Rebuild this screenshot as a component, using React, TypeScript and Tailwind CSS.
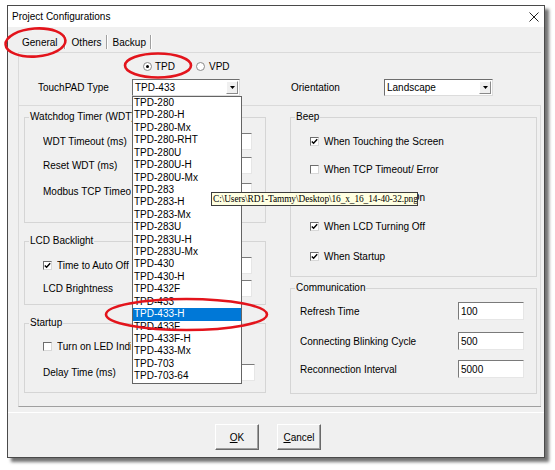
import React from 'react'

const models = [
  'TPD-280', 'TPD-280-H', 'TPD-280-Mx', 'TPD-280-RHT', 'TPD-280U', 'TPD-280U-H', 'TPD-280U-Mx',
  'TPD-283', 'TPD-283-H', 'TPD-283-Mx', 'TPD-283U', 'TPD-283U-H', 'TPD-283U-Mx',
  'TPD-430', 'TPD-430-H', 'TPD-432F', 'TPD-433', 'TPD-433-H', 'TPD-433F', 'TPD-433F-H',
  'TPD-433-Mx', 'TPD-703', 'TPD-703-64',
]

function Field({ value, className = '' }: { value?: string; className?: string }) {
  return (
    <div className={`h-[17px] bg-white border border-t-[#7a7a7a] border-l-[#7a7a7a] border-r-[#e6e6e6] border-b-[#e6e6e6] flex items-center pl-[2px] ${className}`}>
      {value}
    </div>
  )
}

function Check({ on }: { on?: boolean }) {
  return (
    <div className="w-[9px] h-[9px] shrink-0 bg-white border border-t-[#6d6d6d] border-l-[#6d6d6d] border-r-[#d8d8d8] border-b-[#d8d8d8] flex items-center justify-center">
      {on && (
        <svg width="7" height="7" viewBox="0 0 7 7">
          <path d="M0.8 3.4 L2.6 5.3 L6.2 1.2" stroke="#000" strokeWidth="1.4" fill="none" />
        </svg>
      )}
    </div>
  )
}

function Radio({ on }: { on?: boolean }) {
  return (
    <div className="w-[9px] h-[9px] rounded-full bg-white border border-[#8a8a8a] flex items-center justify-center">
      {on && <div className="w-[3px] h-[3px] rounded-full bg-black" />}
    </div>
  )
}

function Combo({ value, className = '', children }: { value: string; className?: string; children?: React.ReactNode }) {
  return (
    <div className={`relative h-[17px] ${className}`}>
      <div className="h-full bg-white border border-t-[#6d6d6d] border-l-[#6d6d6d] border-r-[#dcdcdc] border-b-[#dcdcdc] flex items-center pl-[2px]">
        <span className="flex-1">{value}</span>
        <div className="w-[12px] h-[13px] mr-[1px] bg-[#f0f0f0] border border-t-white border-l-white border-r-[#8a8a8a] border-b-[#8a8a8a] flex items-center justify-center">
          <svg width="5" height="3" viewBox="0 0 5 3">
            <polygon points="0,0 5,0 2.5,3" fill="#000" />
          </svg>
        </div>
      </div>
      {children}
    </div>
  )
}

function Group({ title, className = '', children }: { title: string; className?: string; children: React.ReactNode }) {
  return (
    <fieldset className={`border border-[#d5d5d5] ${className}`}>
      <legend className="ml-[4px] px-[1px] leading-[12px]">{title}</legend>
      {children}
    </fieldset>
  )
}

// left-column labels are cut off where the open list covers them
function Clip({ children }: { children: React.ReactNode }) {
  return <span className="w-[88px] overflow-hidden whitespace-nowrap">{children}</span>
}

function Button({ children }: { children: React.ReactNode }) {
  return (
    <div className="w-[44px] h-[26px] bg-[#f0f0f0] border border-t-white border-l-white border-r-[#696969] border-b-[#696969] shadow-[inset_-1px_-1px_0_#a0a0a0] flex items-center justify-center">
      {children}
    </div>
  )
}

export default function App() {
  return (
    <div className="relative w-[555px] h-[470px] bg-white overflow-hidden pt-[5px] pl-[7px] font-['Liberation_Sans',Arial,sans-serif] text-[10px] text-black">
      <div className="w-[538px] h-[453px] bg-[#f0f0f0] border border-[#4a4a4a] shadow-[4px_4px_3px_rgba(0,0,0,0.55)] flex flex-col">
        {/* title bar */}
        <div className="h-[21px] bg-white flex items-center justify-between pl-[4px] pr-[5px]">
          <span>Project Configurations</span>
          <svg width="10" height="10" viewBox="0 0 10 10">
            <path d="M0.5 0.5 L9.5 9.5 M9.5 0.5 L0.5 9.5" stroke="#222" strokeWidth="1" />
          </svg>
        </div>

        {/* tabs */}
        <div className="h-[25px] flex items-center pt-[5px] pl-[14px]">
          <span>General</span>
          <div className="w-[2px] h-[14px] ml-[6px] border-l border-[#a0a0a0] border-r border-r-white" />
          <span className="ml-[6px]">Others</span>
          <div className="w-[2px] h-[14px] ml-[4px] border-l border-[#a0a0a0] border-r border-r-white" />
          <span className="ml-[5px]">Backup</span>
          <div className="w-[2px] h-[14px] ml-[4px] border-l border-[#a0a0a0] border-r border-r-white" />
        </div>

        {/* tab page */}
        <div className="ml-[10px] w-[523px] h-[355px] border-l border-t border-b border-[#dadada] border-b-[#a0a0a0] flex flex-col">
          <div className="h-[53px] border-b border-[#dadada] shrink-0">
            <div className="mt-[6px] h-[14px] flex items-center ml-[124px]">
              <Radio on />
              <span className="ml-[3px]">TPD</span>
              <div className="ml-[21px]"><Radio /></div>
              <span className="ml-[4px]">VPD</span>
            </div>
            <div className="mt-[6px] h-[17px] flex items-center pl-[19px]">
              <span className="w-[94px]">TouchPAD Type</span>
              <Combo value="TPD-433" className="w-[108px] z-10">
                <div className="absolute left-0 top-full w-[110px] bg-white border border-[#646464] flex flex-col">
                  {models.map((m) => (
                    <div
                      key={m}
                      className={`h-[12.43px] leading-[12.43px] pl-[1px] ${m === 'TPD-433-H' ? 'bg-[#0078d7] text-white' : ''}`}
                    >
                      {m}
                    </div>
                  ))}
                </div>
              </Combo>
              <span className="ml-[51px] w-[93px]">Orientation</span>
              <Combo value="Landscape" className="w-[109px]" />
            </div>
          </div>

          <div className="flex-1 flex pl-[5px] pt-[5px] gap-[24px] border-r border-[#dadada]">
            {/* left column */}
            <div className="w-[242px] flex flex-col">
              <Group title="Watchdog Timer (WDT)">
                <div className="pt-[10px] pb-[22px] pl-[18px] pr-[13px] flex flex-col">
                  <div className="h-[17px] flex items-center justify-between">
                    <Clip>WDT Timeout (ms)</Clip>
                    <Field className="w-[60px]" />
                  </div>
                  <div className="mt-[7px] h-[17px] flex items-center justify-between">
                    <Clip>Reset WDT (ms)</Clip>
                    <Field className="w-[60px]" />
                  </div>
                  <div className="mt-[9px] h-[17px] flex items-center justify-between">
                    <Clip>Modbus TCP Timeout (ms)</Clip>
                    <Field className="w-[60px]" />
                  </div>
                </div>
              </Group>

              <Group title="LCD Backlight" className="mt-[12px]">
                <div className="pt-[10px] pb-[7px] pl-[18px] pr-[13px] flex flex-col">
                  <div className="h-[17px] flex items-center justify-between">
                    <div className="flex items-center gap-[5px]">
                      <Check on />
                      <span className="w-[74px] overflow-hidden whitespace-nowrap">Time to Auto Off</span>
                    </div>
                    <Field className="w-[60px]" />
                  </div>
                  <div className="mt-[6px] h-[17px] flex items-center justify-between">
                    <Clip>LCD Brightness</Clip>
                    <Field className="w-[60px]" />
                  </div>
                </div>
              </Group>

              <Group title="Startup" className="mt-[12px]">
                <div className="pt-[9px] pb-[11px] pl-[18px] pr-[10px] flex flex-col">
                  <div className="h-[17px] flex items-center gap-[5px]">
                    <Check />
                    <span className="w-[74px] overflow-hidden whitespace-nowrap">Turn on LED Indicator</span>
                  </div>
                  <div className="mt-[9px] h-[17px] flex items-center justify-between">
                    <Clip>Delay Time (ms)</Clip>
                    <Field className="w-[60px]" />
                  </div>
                </div>
              </Group>
            </div>

            {/* right column */}
            <div className="w-[247px] flex flex-col">
              <Group title="Beep">
                <div className="pt-[11px] pb-[13px] pl-[19px] flex flex-col">
                  <div className="h-[14px] flex items-center gap-[5px]">
                    <Check on />
                    <span>When Touching the Screen</span>
                  </div>
                  <div className="mt-[14px] h-[14px] flex items-center gap-[5px]">
                    <Check />
                    <span>When TCP Timeout/ Error</span>
                  </div>
                  <div className="mt-[14px] h-[14px] flex items-center gap-[5px]">
                    <Check on />
                    <span>When LCD Turning On</span>
                  </div>
                  <div className="mt-[15px] h-[14px] flex items-center gap-[5px]">
                    <Check on />
                    <span>When LCD Turning Off</span>
                  </div>
                  <div className="mt-[16px] h-[14px] flex items-center gap-[5px]">
                    <Check on />
                    <span>When Startup</span>
                  </div>
                </div>
              </Group>

              <Group title="Communication" className="mt-[5px]">
                <div className="pt-[8px] pb-[15px] pl-[9px] pr-[12px] flex flex-col">
                  <div className="h-[18px] flex items-center justify-between">
                    <span>Refresh Time</span>
                    <Field value="100" className="w-[66px] h-[18px]" />
                  </div>
                  <div className="mt-[12px] h-[18px] flex items-center justify-between">
                    <span>Connecting Blinking Cycle</span>
                    <Field value="500" className="w-[66px] h-[18px]" />
                  </div>
                  <div className="mt-[10px] h-[18px] flex items-center justify-between">
                    <span>Reconnection Interval</span>
                    <Field value="5000" className="w-[66px] h-[18px]" />
                  </div>
                </div>
              </Group>
            </div>
          </div>
        </div>

        {/* buttons */}
        <div className="mt-[5px] border-t border-white flex pt-[11px] pl-[207px] gap-[18px]">
          <Button><span><u>O</u>K</span></Button>
          <Button><span><u>C</u>ancel</span></Button>
        </div>
      </div>

      {/* tooltip */}
      <div className="absolute left-[211px] top-[192px] w-[207px] h-[14px] bg-[#ffffe1] border border-[#3c3c3c] flex items-center pl-[1px] font-['Liberation_Serif','Times_New_Roman',serif] text-[9.4px] tracking-[-0.1px] z-20 whitespace-nowrap overflow-hidden">
        {'C:\\Users\\RD1-Tammy\\Desktop\\16_x_16_14-40-32.png'}
      </div>

      {/* red annotation marks */}
      <svg className="absolute inset-0 pointer-events-none z-30" width="555" height="470" viewBox="0 0 555 470">
        <ellipse cx="35.5" cy="42.5" rx="30" ry="14" fill="none" stroke="#e3141c" strokeWidth="2.6" transform="rotate(-4 35.5 42.5)" />
        <ellipse cx="158" cy="65.5" rx="33" ry="12" fill="none" stroke="#e3141c" strokeWidth="2.6" />
        <ellipse cx="186.5" cy="314.5" rx="80.5" ry="15.5" fill="none" stroke="#e3141c" strokeWidth="2.6" />
      </svg>
    </div>
  )
}
